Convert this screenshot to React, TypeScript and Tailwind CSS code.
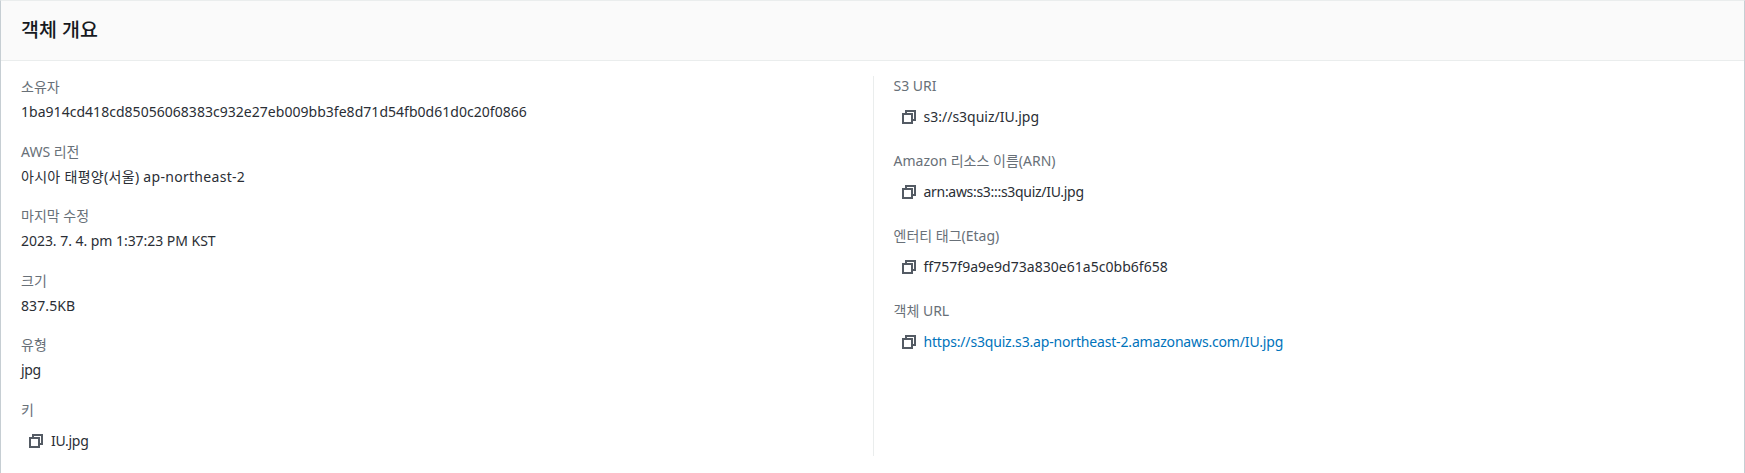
import React from 'react';

const font = "font-['Noto_Sans','Noto_Sans_CJK_KR',sans-serif]";

const CopyIcon = () => (
  <svg viewBox="0 0 16 16" className="w-4 h-4 shrink-0" fill="none" stroke="#545b64" strokeWidth="2">
    <path d="M2 5h9v9H2z" />
    <path d="M5 5V2h9v9h-3" />
  </svg>
);

const leftRows = [
  { label: '소유자', value: '1ba914cd418cd85056068383c932e27eb009bb3fe8d71d54fb0d61d0c20f0866', tracking: 'tracking-[0.03px]' },
  { label: 'AWS 리전', value: '아시아 태평양(서울) ap-northeast-2', tracking: 'tracking-[0.3px]' },
  { label: '마지막 수정', value: '2023. 7. 4. pm 1:37:23 PM KST', tracking: 'tracking-[-0.04px]' },
  { label: '크기', value: '837.5KB', tracking: 'tracking-[0.1px]' },
  { label: '유형', value: 'jpg', tracking: 'tracking-[-0.3px]' },
];

const rightRows = [
  { label: 'S3 URI', value: 's3://s3quiz/IU.jpg', tracking: '' },
  { label: 'Amazon 리소스 이름(ARN)', value: 'arn:aws:s3:::s3quiz/IU.jpg', tracking: 'tracking-[-0.3px]' },
  { label: '엔터티 태그(Etag)', value: 'ff757f9a9e9d73a830e61a5c0bb6f658', tracking: 'tracking-[0.03px]' },
  { label: '객체 URL', value: 'https://s3quiz.s3.ap-northeast-2.amazonaws.com/IU.jpg', tracking: 'tracking-[-0.17px]', link: true },
];

const CopyValue = ({ value, tracking, link }: { value: string; tracking: string; link?: boolean }) => (
  <div className="flex items-center gap-[7px] pl-[7px] mt-[7px] h-[25px]">
    <CopyIcon />
    <span className={`${tracking} ${link ? 'text-[#0073bb]' : 'text-[#2a2e35]'}`}>{value}</span>
  </div>
);

export default function App() {
  return (
    <div className={`${font} h-[473px] bg-white text-[14px] leading-[22px] text-[#2a2e35] border-t border-t-[#eaeded] border-x border-x-[#c6ced3] overflow-hidden`}>
      <div className="h-[60px] bg-[#fafafa] border-b border-[#eaeded] flex items-center px-5 pb-[2px]">
        <h2 className="text-[19.5px] font-medium leading-[22px] text-[#16191f]">객체 개요</h2>
      </div>
      <div className="grid grid-cols-2 pt-[15px] pl-5">
        <div className="flex flex-col gap-[17.6px]">
          {leftRows.map((row) => (
            <div key={row.label}>
              <div className="text-[#687078]">{row.label}</div>
              <div className={`mt-[3px] ${row.tracking}`}>{row.value}</div>
            </div>
          ))}
          <div>
            <div className="text-[#687078]">키</div>
            <div className="pt-[1px]">
              <CopyValue value="IU.jpg" tracking="tracking-[-0.3px]" />
            </div>
          </div>
        </div>
        <div className="border-l border-[#eaeded] pl-5 h-[380px] ml-[-10px]">
          <div className="flex flex-col gap-[21px] -mt-px">
            {rightRows.map((row) => (
              <div key={row.label}>
                <div className="text-[#687078]">{row.label}</div>
                <CopyValue value={row.value} tracking={row.tracking} link={row.link} />
              </div>
            ))}
          </div>
        </div>
      </div>
    </div>
  );
}
